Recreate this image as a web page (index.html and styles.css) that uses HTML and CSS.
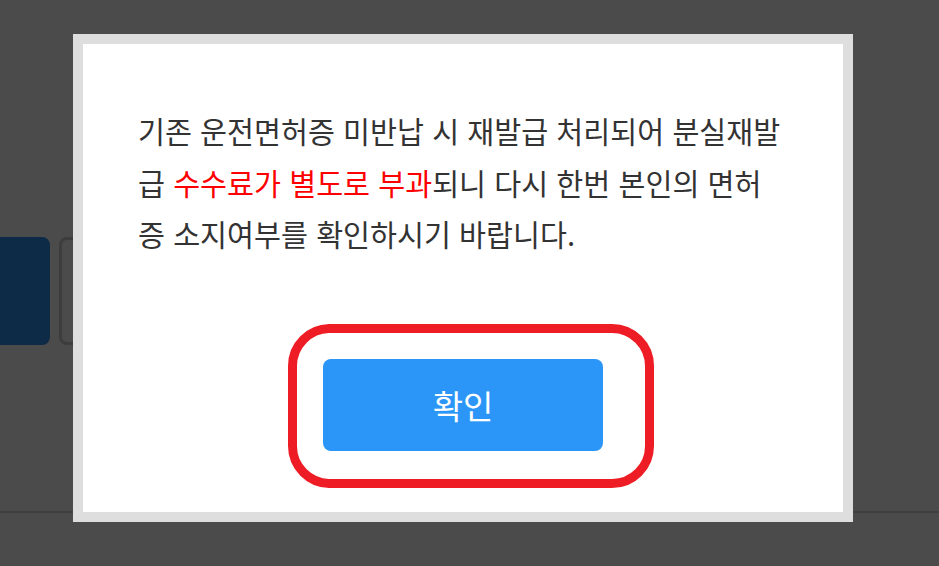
FILE: index.html
```html
<!DOCTYPE html>
<html lang="ko">
<head>
<meta charset="utf-8">
<link rel="stylesheet" href="styles.css">
</head>
<body>
<div class="page">
  <div class="actions">
    <div class="btn-dark"></div>
    <div class="btn-outline"></div>
  </div>
  <div class="footer-line"></div>
</div>

<div class="modal">
  <div class="modal-body">
    <p class="message">기존 운전면허증 미반납 시 재발급 처리되어 분실재발급 <span class="warn">수수료가 별도로 부과</span>되니 다시 한번 본인의 면허증 소지여부를 확인하시기 바랍니다.</p>
    <div class="modal-foot">
      <div class="confirm-wrap">
        <button class="confirm" type="button">확인</button>
        <div class="highlight"></div>
      </div>
    </div>
  </div>
</div>
</body>
</html>
```

FILE: styles.css
```css
html, body {
  margin: 0;
  padding: 0;
}
body {
  background: #4b4b4b;
  width: 939px;
  height: 566px;
  overflow: hidden;
  font-family: "Noto Sans CJK KR", "Noto Sans", sans-serif;
}
.page {
  padding-top: 237px;
}
.actions {
  display: flex;
  gap: 9px;
  margin-left: -60px;
}
.btn-dark {
  width: 110px;
  height: 108px;
  background: #0d2a47;
  border-radius: 8px;
}
.btn-outline {
  width: 110px;
  height: 108px;
  box-sizing: border-box;
  border: 3px solid #3d3d3d;
  border-radius: 8px;
}
.footer-line {
  margin-top: 166px;
  height: 2px;
  background: #404040;
}
.modal {
  position: fixed;
  left: 73px;
  top: 34px;
  width: 780px;
  height: 488px;
  box-sizing: border-box;
  border: 10px solid #dedede;
  background: #ffffff;
}
.modal-body {
  padding: 61px 0 0 55px;
}
.message {
  margin: 0;
  width: 646px;
  font-size: 29.3px;
  line-height: 51.5px;
  color: #333333;
}
.warn {
  color: #ff0000;
}
.modal-foot {
  display: flex;
  justify-content: center;
  margin-left: -55px;
  margin-top: 99px;
}
.confirm-wrap {
  position: relative;
}
.confirm {
  display: block;
  width: 280px;
  height: 92px;
  border: 0;
  border-radius: 8px;
  background: #2b96f8;
  color: #ffffff;
  font-family: "Noto Sans CJK KR", "Noto Sans", sans-serif;
  font-size: 33px;
  padding: 0;
}
.highlight {
  position: absolute;
  left: -35px;
  right: -51px;
  top: -35px;
  bottom: -37px;
  border: 9px solid #ee1d25;
  border-radius: 42px;
}
```
